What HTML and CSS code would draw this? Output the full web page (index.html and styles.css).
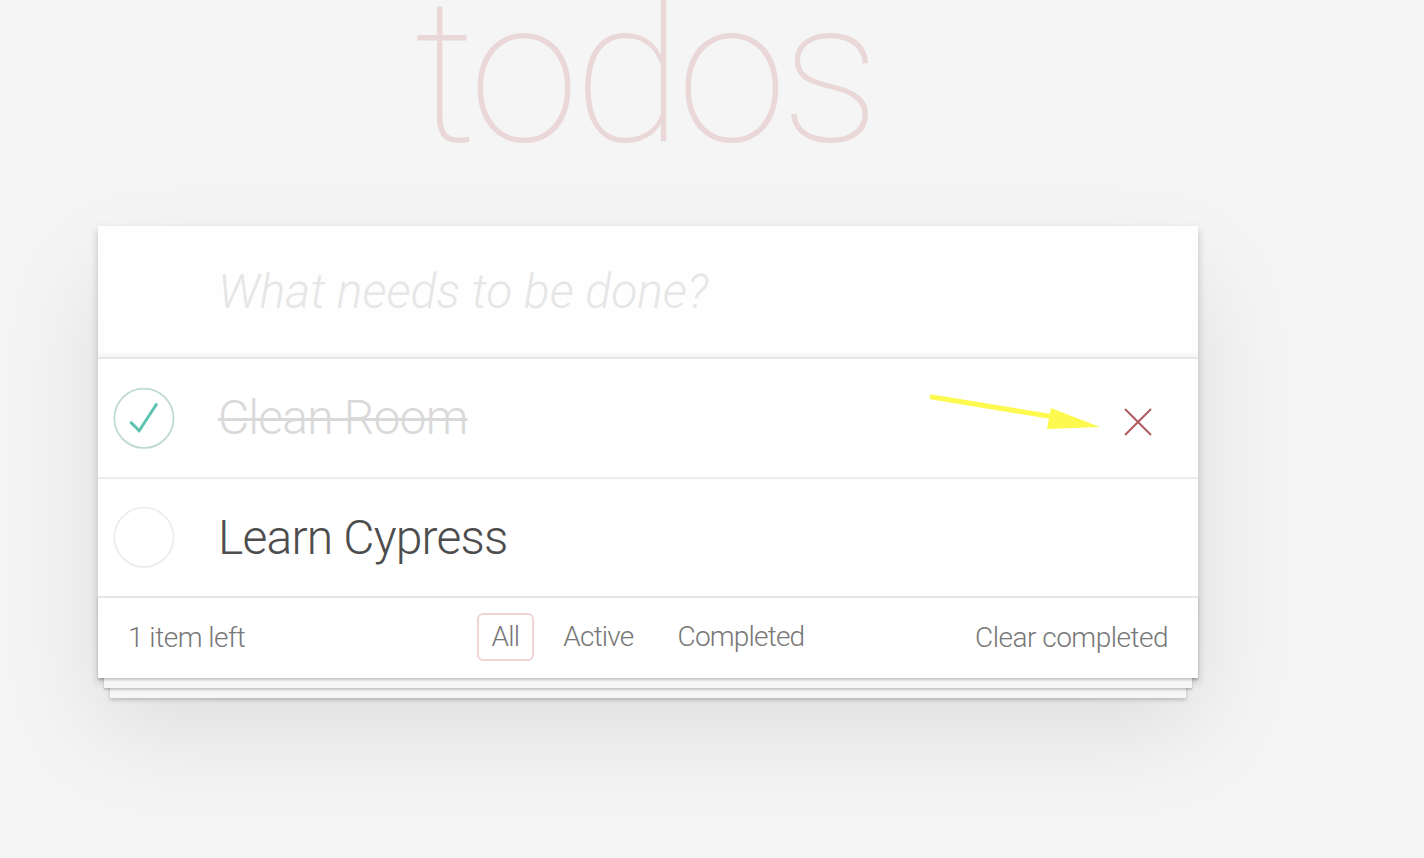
FILE: index.html
```html
<!DOCTYPE html>
<html lang="en">
<head>
<meta charset="utf-8">
<title>todos</title>
<link rel="stylesheet" href="styles.css">
</head>
<body>
<div class="page">
  <h1 class="title">todos</h1>
  <section class="todoapp">
    <header class="header">
      <input class="new-todo" placeholder="What needs to be done?">
    </header>
    <section class="main">
      <ul class="todo-list">
        <li class="todo completed">
          <span class="toggle">
            <svg width="80" height="80" viewBox="-10 -18 100 135"><circle cx="50" cy="50" r="50" fill="none" stroke="#bddad5" stroke-width="3"/><path d="M72 25L42 71 27 56" fill="none" stroke="#5dc2af" stroke-width="5"/></svg>
          </span>
          <label class="todo-label">Clean Room</label>
          <button class="destroy" aria-label="delete">
            <svg width="80" height="80" viewBox="0 0 80 80"><path d="M27 27L53 53M53 27L27 53" stroke="#af5b5e" stroke-width="2"/></svg>
          </button>
        </li>
        <li class="todo">
          <span class="toggle">
            <svg width="80" height="80" viewBox="-10 -18 100 135"><circle cx="50" cy="50" r="50" fill="none" stroke="#ededed" stroke-width="3"/></svg>
          </span>
          <label class="todo-label">Learn Cypress</label>
        </li>
      </ul>
    </section>
    <footer class="footer">
      <span class="todo-count">1 item left</span>
      <ul class="filters">
        <li><a class="filter selected">All</a></li>
        <li><a class="filter">Active</a></li>
        <li><a class="filter">Completed</a></li>
      </ul>
      <button class="clear-completed">Clear completed</button>
    </footer>
  </section>
  <svg class="arrow" width="1424" height="858" viewBox="0 0 1424 858">
    <line x1="932" y1="397" x2="1060" y2="418" stroke="#fdf94f" stroke-width="5" stroke-linecap="round"/>
    <polygon points="1051,408 1047,429 1100,427" fill="#fdf94f"/>
  </svg>
</div>
</body>
</html>
```

FILE: styles.css
```css
html, body {
  margin: 0;
  padding: 0;
}

body {
  background: #f5f5f5;
  font-family: Roboto, "Helvetica Neue", "Liberation Sans", sans-serif;
  font-weight: 300;
  color: #4d4d4d;
  overflow: hidden;
  height: 858px;
}

.page {
  display: flow-root;
  position: relative;
  padding-left: 98px;
  height: 858px;
}

.title {
  width: 1100px;
  margin: -27px 0 0 0;
  height: 200px;
  font-size: 200px;
  line-height: 200px;
  font-weight: 100;
  letter-spacing: -6px;
  text-indent: -8px;
  text-align: center;
  color: rgba(175, 47, 47, 0.15);
}

.todoapp {
  width: 1100px;
  margin-top: 53px;
  background: #fff;
  box-shadow: 0 4px 8px 0 rgba(0, 0, 0, 0.2), 0 50px 100px 0 rgba(0, 0, 0, 0.1);
  position: relative;
}

.header {
  display: block;
}

.new-todo {
  display: block;
  width: 100%;
  height: 131px;
  box-sizing: border-box;
  margin: 0;
  padding: 32px 32px 32px 120px;
  border: none;
  outline: none;
  background: rgba(0, 0, 0, 0.003);
  box-shadow: inset 0 -4px 2px rgba(0, 0, 0, 0.03);
  font-family: inherit;
  font-size: 48px;
  font-weight: 300;
  line-height: 67px;
  color: #4d4d4d;
}

.new-todo::placeholder {
  font-style: italic;
  font-weight: 300;
  color: #e6e6e6;
}

.main {
  border-top: 2px solid #e6e6e6;
}

.todo-list {
  list-style: none;
  margin: 0;
  padding: 0;
}

.todo {
  display: flex;
  align-items: center;
  border-bottom: 2px solid #ededed;
  font-size: 48px;
}

.todo:last-child {
  border-bottom: none;
}

.toggle {
  flex: none;
  width: 80px;
  height: 80px;
}

.toggle svg {
  display: block;
}

.todo-label {
  flex: 1;
  padding: 30px 30px 30px 40px;
  line-height: 57.6px;
  letter-spacing: -0.8px;
  color: #4d4d4d;
  font-weight: 300;
}

.completed .todo-label {
  color: #d9d9d9;
  text-decoration: line-through;
  text-decoration-thickness: 3px;
}

.destroy {
  flex: none;
  width: 80px;
  height: 80px;
  margin: 8px 20px 0 0;
  padding: 0;
  border: none;
  background: none;
}

.destroy svg {
  display: block;
}

.footer {
  display: grid;
  grid-template-columns: 1fr auto 1fr;
  align-items: center;
  height: 40px;
  padding: 15px 30px 25px;
  border-top: 2px solid #e6e6e6;
  color: #777;
  font-size: 28px;
  letter-spacing: -0.5px;
  box-shadow: 0 2px 2px rgba(0, 0, 0, 0.2),
    0 16px 0 -6px #f6f6f6,
    0 18px 2px -6px rgba(0, 0, 0, 0.2),
    0 32px 0 -12px #f6f6f6,
    0 34px 4px -12px rgba(0, 0, 0, 0.2);
}

.todo-count {
  justify-self: start;
}

.filters {
  display: flex;
  gap: 14px;
  list-style: none;
  margin: 0;
  padding: 0;
}

.filter {
  display: block;
  padding: 6px 13px;
  line-height: 32px;
  letter-spacing: -0.8px;
  border: 2px solid transparent;
  border-radius: 6px;
  color: #777;
}

.filter.selected {
  border-color: rgba(175, 47, 47, 0.2);
}

.clear-completed {
  justify-self: end;
  margin: 0;
  padding: 0;
  border: none;
  background: none;
  font-family: inherit;
  font-size: 28px;
  font-weight: 300;
  letter-spacing: -0.5px;
  color: #777;
}

.arrow {
  position: absolute;
  left: 0;
  top: 0;
  pointer-events: none;
}
```
